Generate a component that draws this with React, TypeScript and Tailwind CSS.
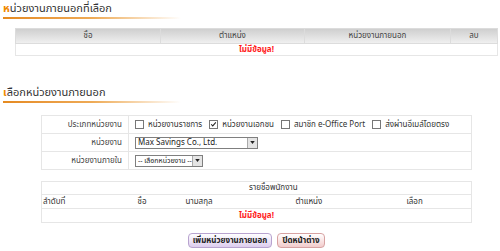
import React from "react";

const font = { fontFamily: 'Tahoma, "Noto Sans Thai", "Noto Sans", "DejaVu Sans", sans-serif' };

const SectionTitle = ({ text }: { text: string }) => (
  <div className="pl-[3px]">
    <div className="h-[13px] overflow-visible text-[11px] leading-[13px] text-[#333]">
      <span className="font-bold text-[#f08a00]">{text[0]}</span>
      {text.slice(1)}
    </div>
    <div className="mt-[2px] h-[2px] w-[178px] bg-gradient-to-r from-[#e58a1f] via-[#eeaa55] to-transparent" />
  </div>
);

const Check = ({ checked }: { checked?: boolean }) => (
  <span className="relative inline-block h-[9px] w-[9px] shrink-0 border border-[#777] bg-white">
    {checked && (
      <svg viewBox="0 0 9 9" className="absolute inset-0 h-full w-full">
        <path d="M1.5 4.2 L3.5 6.3 L7.5 1.8" stroke="#222" strokeWidth="1.3" fill="none" />
      </svg>
    )}
  </span>
);

const FakeSelect = ({ value, w, size }: { value: string; w: string; size: string }) => (
  <div className={`flex h-[12px] items-center border border-[#7f7f7f] bg-white ${w}`}>
    <span className={`flex-1 overflow-hidden whitespace-nowrap pl-[2px] leading-[10px] text-[#222] ${size}`}>{value}</span>
    <span className="flex h-[10px] w-[10px] items-center justify-center border-l border-[#aaa] bg-[#e4e4e4]">
      <svg viewBox="0 0 6 4" className="h-[3px] w-[5px]">
        <path d="M0 0 L6 0 L3 4 Z" fill="#222" />
      </svg>
    </span>
  </div>
);

export default function App() {
  const labelCell = "w-[87px] border border-[#e6e6e6] pr-[6px] text-right text-[#444] whitespace-nowrap";
  const valueCell = "border border-[#e6e6e6] pl-[6px]";
  return (
    <div className="h-[251px] w-[500px] overflow-hidden bg-white text-[8px] leading-[10px] whitespace-nowrap" style={font}>
      <div className="pt-[2px]">
        <SectionTitle text="หน่วยงานภายนอกที่เลือก" />
      </div>

      <table className="ml-[15px] mt-[9px] w-[483px] table-fixed border-collapse">
        <colgroup>
          <col className="w-[145px]" />
          <col className="w-[144px]" />
          <col className="w-[146px]" />
          <col />
        </colgroup>
        <thead>
          <tr className="h-[15px] bg-gradient-to-b from-[#cfcfcf] to-[#f2f2f2] text-[#444]">
            <th className="border border-[#dcdcdc] p-0 font-normal">ชื่อ</th>
            <th className="border border-[#dcdcdc] p-0 font-normal">ตำแหน่ง</th>
            <th className="border border-[#dcdcdc] p-0 font-normal">หน่วยงานภายนอก</th>
            <th className="border border-[#dcdcdc] p-0 font-normal">ลบ</th>
          </tr>
        </thead>
        <tbody>
          <tr className="h-[12px]">
            <td colSpan={4} className="border border-[#e6e6e6] p-0 text-center font-bold text-[#ff1a1a]">
              ไม่มีข้อมูล!
            </td>
          </tr>
        </tbody>
      </table>

      <div className="mt-[30px]">
        <SectionTitle text="เลือกหน่วยงานภายนอก" />
      </div>

      <div className="ml-[41px] w-[431px]">
        <table className="mt-[12px] w-full table-fixed border-collapse">
          <colgroup>
            <col className="w-[87px]" />
            <col />
          </colgroup>
          <tbody>
            <tr className="h-[18px]">
              <td className={labelCell}>ประเภทหน่วยงาน</td>
              <td className={valueCell}>
                <div className="flex items-center gap-[4px] text-[#333]">
                  <Check />
                  <span className="mr-[3px]">หน่วยงานราชการ</span>
                  <Check checked />
                  <span className="mr-[3px]">หน่วยงานเอกชน</span>
                  <Check />
                  <span className="mr-[3px]">สมาชิก e-Office Port</span>
                  <Check />
                  <span>ส่งผ่านอีเมล์โดยตรง</span>
                </div>
              </td>
            </tr>
            <tr className="h-[18px]">
              <td className={labelCell}>หน่วยงาน</td>
              <td className={valueCell}>
                <FakeSelect value="Max Savings Co., Ltd." w="w-[123px]" size="text-[8px]" />
              </td>
            </tr>
            <tr className="h-[18px]">
              <td className={labelCell}>หน่วยงานภายใน</td>
              <td className={valueCell}>
                <FakeSelect value="-- เลือกหน่วยงาน --" w="w-[68px]" size="text-[7px]" />
              </td>
            </tr>
          </tbody>
        </table>

        <table className="mt-[11px] w-full table-fixed border-collapse text-[#333]">
          <colgroup>
            <col className="w-[96px]" />
            <col className="w-[48px]" />
            <col className="w-[110px]" />
            <col className="w-[111px]" />
            <col />
          </colgroup>
          <tbody>
            <tr className="h-[13px]">
              <td colSpan={5} className="border border-[#e6e6e6] p-0 pl-[207px]">
                รายชื่อพนักงาน
              </td>
            </tr>
            <tr className="h-[14px]">
              <td className="border-y border-l border-[#e6e6e6] p-0 pl-[1px]">ลำดับที่</td>
              <td className="border-y border-[#e6e6e6] p-0">ชื่อ</td>
              <td className="border-y border-[#e6e6e6] p-0">นามสกุล</td>
              <td className="border-y border-[#e6e6e6] p-0">ตำแหน่ง</td>
              <td className="border-y border-r border-[#e6e6e6] p-0">เลือก</td>
            </tr>
            <tr className="h-[14px]">
              <td colSpan={5} className="border border-[#e6e6e6] p-0 text-center font-bold text-[#ff1a1a]">
                ไม่มีข้อมูล!
              </td>
            </tr>
          </tbody>
        </table>

        <div className="mt-[10px] flex justify-center gap-[5px]">
          <button className="h-[15px] w-[84px] rounded-[4px] border border-[#b8a3cf] bg-gradient-to-b from-white to-[#ddcdee] p-0 text-[8px] font-bold leading-[10px] text-[#222]">
            เพิ่มหน่วยงานภายนอก
          </button>
          <button className="h-[15px] w-[48px] rounded-[4px] border border-[#d7a2a2] bg-gradient-to-b from-white to-[#f2cccc] p-0 text-[8px] font-bold leading-[10px] text-[#222]">
            ปิดหน้าต่าง
          </button>
        </div>
      </div>
    </div>
  );
}
